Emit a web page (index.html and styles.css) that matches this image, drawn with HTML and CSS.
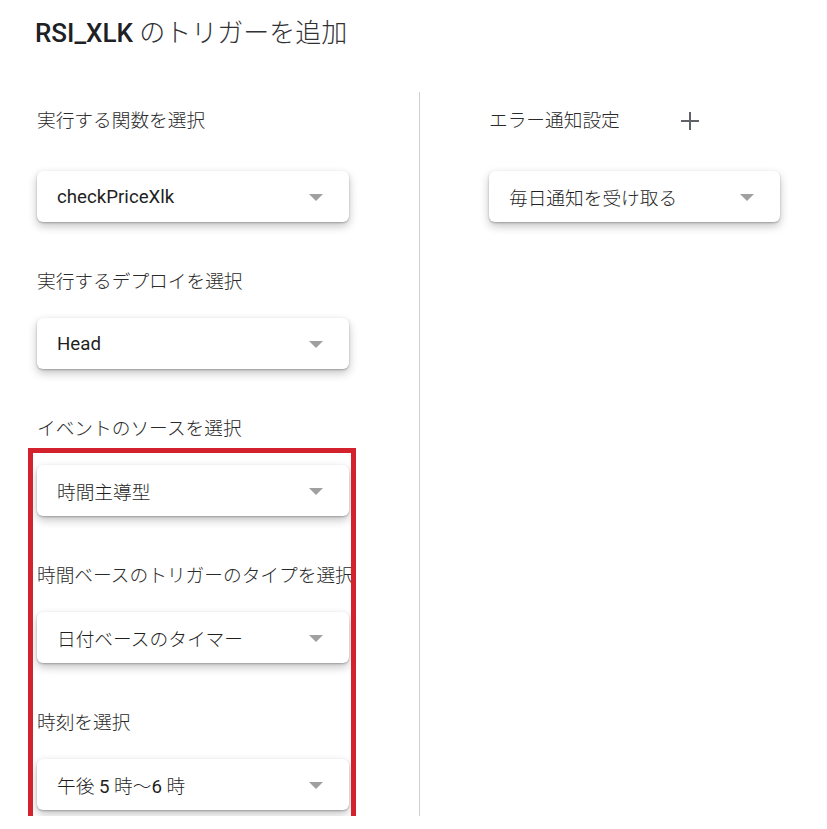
FILE: index.html
```html
<!DOCTYPE html>
<html lang="ja">
<head>
<meta charset="utf-8">
<title>RSI_XLK のトリガーを追加</title>
<link rel="stylesheet" href="styles.css">
</head>
<body>
<div class="page">
  <h1 class="title"><span class="title-id">RSI_XLK</span> のトリガーを追加</h1>
  <div class="columns">
    <div class="col col-left">
      <div class="label label-first">実行する関数を選択</div>
      <div class="select select-first"><span class="select-text latin">checkPriceXlk</span><span class="arrow"></span></div>

      <div class="label">実行するデプロイを選択</div>
      <div class="select"><span class="select-text latin">Head</span><span class="arrow"></span></div>

      <div class="label">イベントのソースを選択</div>
      <div class="group">
        <div class="select"><span class="select-text">時間主導型</span><span class="arrow"></span></div>

        <div class="label">時間ベースのトリガーのタイプを選択</div>
        <div class="select"><span class="select-text">日付ベースのタイマー</span><span class="arrow"></span></div>

        <div class="label">時刻を選択</div>
        <div class="select"><span class="select-text">午後 <span class="latin">5</span> 時～<span class="latin">6</span> 時</span><span class="arrow"></span></div>

        <div class="highlight"></div>
      </div>
    </div>

    <div class="col col-right">
      <div class="label label-first label-row">
        <span>エラー通知設定</span>
        <svg class="plus" width="18" height="18" viewBox="0 0 18 18" aria-hidden="true">
          <path d="M9 0V18M0 9H18" stroke="#5f6368" stroke-width="2" fill="none"/>
        </svg>
      </div>
      <div class="select select-first select-right"><span class="select-text">毎日通知を受け取る</span><span class="arrow"></span></div>
    </div>
  </div>
</div>
</body>
</html>
```

FILE: styles.css
```css
html, body {
  margin: 0;
  padding: 0;
  background: #ffffff;
}

body {
  font-family: Roboto, "Noto Sans CJK JP", "Noto Sans", sans-serif;
  color: #303134;
}

.page {
  padding: 16px 0 0 0;
}

.title {
  margin: 0 0 0 35px;
  font-size: 26px;
  line-height: 34px;
  font-weight: 300;
  color: #303134;
  white-space: nowrap;
}

.title-id {
  font-weight: 500;
  color: #202124;
}

.columns {
  display: flex;
  margin-top: 42px;
  align-items: stretch;
}

.col {
  display: flex;
  flex-direction: column;
}

.col-left {
  width: 312px;
  padding-left: 37px;
  padding-bottom: 6px;
}

.col-right {
  margin-left: 70px;
  border-left: 1px solid #cfcfcf;
  padding-left: 69px;
}

.label {
  font-size: 18.7px;
  line-height: 28px;
  font-weight: 300;
  margin-top: 46px;
  white-space: nowrap;
  color: #2a2a2a;
}

.label-first {
  margin-top: 15px;
}

.label-row {
  display: flex;
  align-items: center;
}

.plus {
  margin-left: 61px;
  display: block;
}

.select {
  box-sizing: border-box;
  height: 51px;
  width: 312px;
  margin-top: 22px;
  background: #ffffff;
  border-radius: 6px;
  box-shadow: 0 1px 2px rgba(0, 0, 0, 0.25), 0 4px 10px rgba(0, 0, 0, 0.24);
  display: flex;
  align-items: center;
  justify-content: space-between;
  padding-left: 20px;
  padding-right: 26px;
}

.select-first {
  margin-top: 36px;
}

.select-right {
  width: 291px;
}

.select-text {
  font-size: 18.7px;
  font-weight: 300;
  color: #1f1f1f;
  white-space: nowrap;
}

.latin {
  font-weight: 400;
}

.arrow {
  width: 0;
  height: 0;
  border-left: 7px solid transparent;
  border-right: 7px solid transparent;
  border-top: 7px solid #a0a0a0;
  margin-top: 2px;
}

.group {
  position: relative;
  display: flex;
  flex-direction: column;
}

.group > .select:first-child {
  margin-top: 22px;
}

.highlight {
  position: absolute;
  top: 5px;
  left: -9px;
  right: -7px;
  bottom: -14px;
  border: 5px solid #d3222d;
  pointer-events: none;
}
```
